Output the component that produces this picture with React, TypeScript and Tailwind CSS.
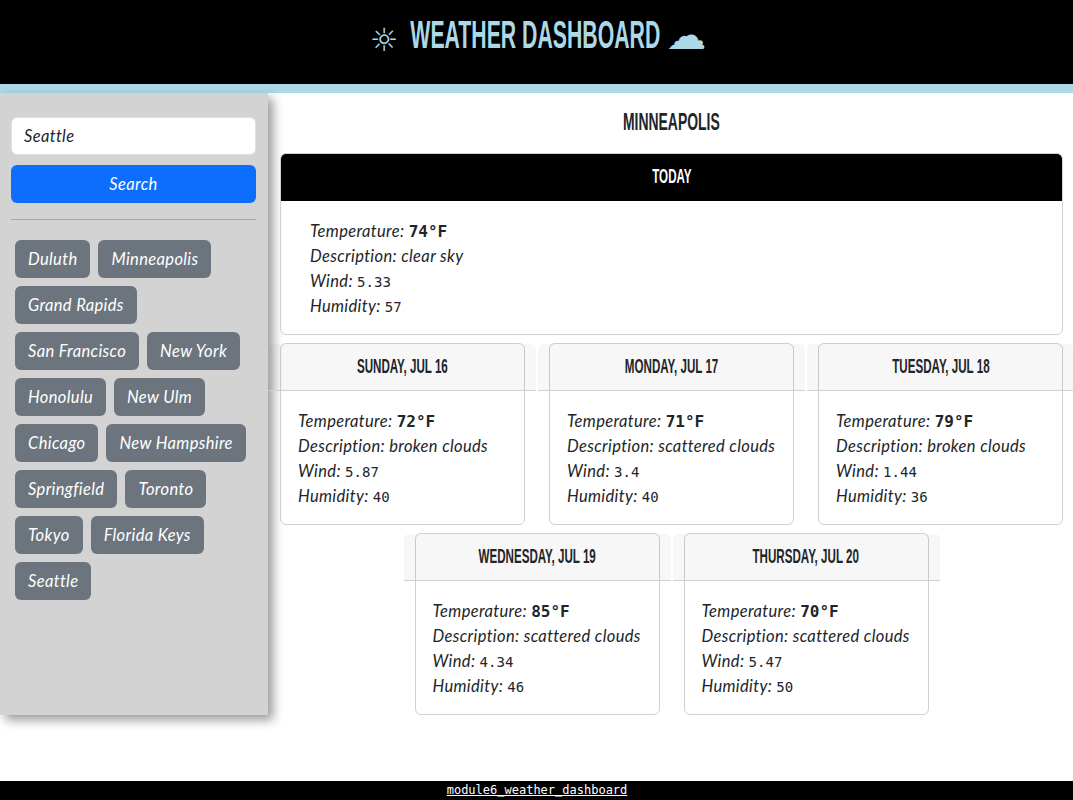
import type { ReactNode } from "react";

const bebas = "font-['Liberation_Sans',sans-serif] font-bold uppercase whitespace-nowrap";
const nunito = "font-['Lato','Noto_Sans',sans-serif] italic tracking-[0.35px]";
const mono = "font-['DejaVu_Sans_Mono',monospace] not-italic tracking-normal";

const cities = [
  "Duluth", "Minneapolis", "Grand Rapids", "San Francisco", "New York", "Honolulu", "New Ulm",
  "Chicago", "New Hampshire", "Springfield", "Toronto", "Tokyo", "Florida Keys", "Seattle",
];

const forecast = [
  { day: "Sunday, Jul 16", temp: "72°F", desc: "broken clouds", wind: "5.87", hum: "40" },
  { day: "Monday, Jul 17", temp: "71°F", desc: "scattered clouds", wind: "3.4", hum: "40" },
  { day: "Tuesday, Jul 18", temp: "79°F", desc: "broken clouds", wind: "1.44", hum: "36" },
  { day: "Wednesday, Jul 19", temp: "85°F", desc: "scattered clouds", wind: "4.34", hum: "46" },
  { day: "Thursday, Jul 20", temp: "70°F", desc: "scattered clouds", wind: "5.47", hum: "50" },
];

function Narrow({ children }: { children: ReactNode }) {
  return <span className="inline-block scale-x-[0.58]">{children}</span>;
}

function Stats({ temp, desc, wind, hum }: { temp: string; desc: string; wind: string; hum: string }) {
  return (
    <div className={`text-[16.5px] leading-[25px] text-[#212529] ${nunito}`}>
      <div className="h-[25px]">
        Temperature: <span className={`${mono} text-[16px] font-bold`}>{temp}</span>
      </div>
      <div className="h-[25px]">Description: {desc}</div>
      <div className="h-[25px]">
        Wind: <span className={`${mono} text-[14px]`}>{wind}</span>
      </div>
      <div className="h-[25px]">
        Humidity: <span className={`${mono} text-[14px]`}>{hum}</span>
      </div>
    </div>
  );
}

export default function App() {
  return (
    <div className="flex h-[800px] flex-col overflow-hidden bg-white">
      <header className="flex h-[93px] shrink-0 items-start justify-center border-b-[9px] border-[#add8e6] bg-black pl-[3px] pt-[12px] text-[#add8e6]">
        <span className="mr-[11px] mt-[8px] font-['DejaVu_Sans',sans-serif] text-[32px] leading-[40px]">☼</span>
        <h1 className={`${bebas} flex w-[251px] justify-center text-[39px] leading-[46px]`}>
          <span className="inline-block scale-x-[0.545]">Weather Dashboard</span>
        </h1>
        <span className="ml-[6px] mt-[3px] font-['DejaVu_Sans',sans-serif] text-[40px] leading-[40px]">☁</span>
      </header>

      <div className="flex flex-1">
        <aside className="h-[622px] w-[268px] shrink-0 bg-[#d3d3d3] pl-[11px] pr-[12px] pt-[24px] shadow-[5px_5px_10px_rgba(0,0,0,0.4)]">
          <div className={`flex h-[38px] items-center rounded-md border border-[#dee2e6] bg-white px-[12px] text-[16.5px] text-[#212529] ${nunito}`}>
            Seattle
          </div>
          <button className={`mt-[10px] h-[38px] w-full rounded-md bg-[#0d6efd] text-[16.5px] text-white ${nunito}`}>
            Search
          </button>
          <hr className="mt-[16px] border-t border-[#a9a9a9]" />
          <div className="mt-[16px] flex flex-wrap">
            {cities.map((c) => (
              <button
                key={c}
                className={`m-[4px] h-[38px] rounded-md bg-[#6c757d] px-[13px] text-[16.5px] text-white ${nunito}`}
              >
                {c}
              </button>
            ))}
          </div>
        </aside>

        <main className="min-w-0 flex-1 pl-[12px] pr-[10px]">
          <h2 className={`${bebas} mt-[14px] text-center text-[24px] leading-[29px] text-[#212529]`}>
            <Narrow>Minneapolis</Narrow>
          </h2>

          <section className="mt-[17px] overflow-hidden rounded-md border border-[#d0d0d0]">
            <div className={`${bebas} h-[47px] bg-black text-center text-[20px] leading-[45px] text-white`}>
              <Narrow>Today</Narrow>
            </div>
            <div className="h-[133px] px-[29px] pt-[18px]">
              <Stats temp="74°F" desc="clear sky" wind="5.33" hum="57" />
            </div>
          </section>

          <div className="mt-[8px] flex flex-wrap justify-center gap-x-[24px] gap-y-[8px]">
            {forecast.map((f) => (
              <article key={f.day} className="h-[182px] w-[245px] rounded-md border border-[#d0d0d0]">
                <div
                  className={`${bebas} -mx-[12px] h-[47px] rounded-t-[5px] border-b border-[#d0d0d0] bg-[rgba(0,0,0,0.03)] text-center text-[20px] leading-[45px] text-[#212529]`}
                >
                  <Narrow>{f.day}</Narrow>
                </div>
                <div className="px-[17px] pt-[18px]">
                  <Stats temp={f.temp} desc={f.desc} wind={f.wind} hum={f.hum} />
                </div>
              </article>
            ))}
          </div>
        </main>
      </div>

      <footer className="h-[19px] shrink-0 bg-black pl-[1px] text-center font-['DejaVu_Sans_Mono',monospace] text-[12px] leading-[18px] text-white">
        <a className="underline" href="#">module6_weather_dashboard</a>
      </footer>
    </div>
  );
}
